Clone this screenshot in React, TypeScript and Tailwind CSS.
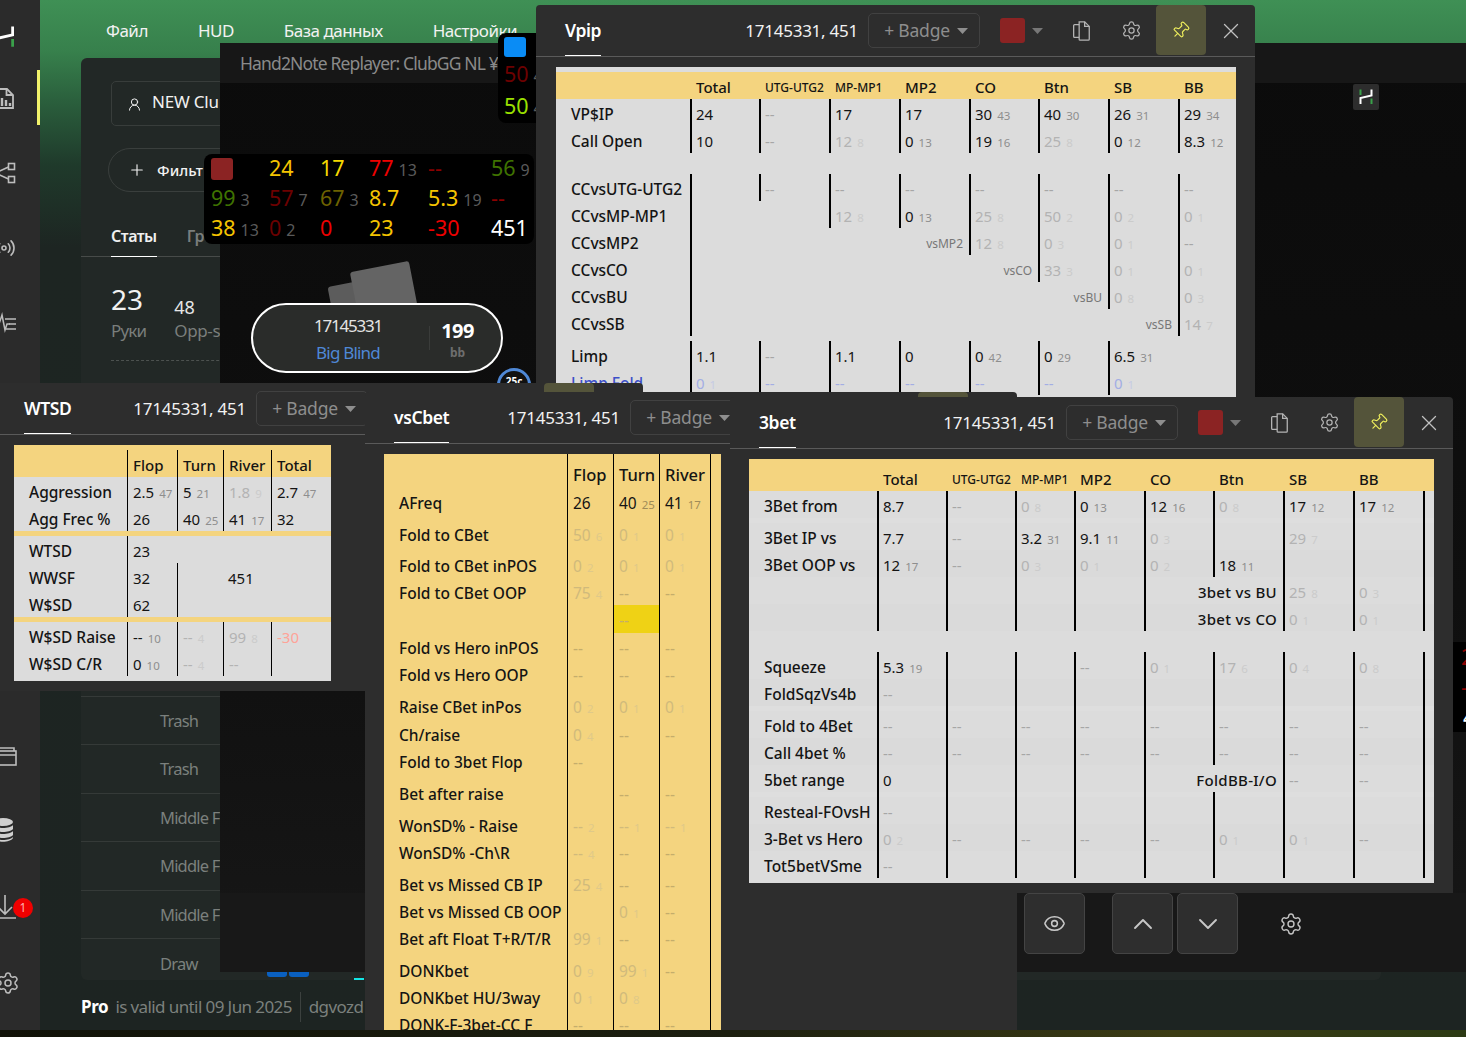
import React from "react";
import { ChevronDown, ChevronUp, Eye, Pin, Plus, Radio, Settings, UserRound, X } from "lucide-react";

type Cell = string | { t: string; span: number; small?: boolean; noLine?: boolean };
type Row = {
  label?: string;
  cells?: Cell[];
  h?: string;
  bg?: string;
  blue?: boolean;
};
const span: Record<number, string> = {
  2: "col-span-2",
  3: "col-span-3",
  4: "col-span-4",
  5: "col-span-5",
  6: "col-span-6",
  7: "col-span-7",
};

function Value({ token, tone, blue }: { token: string; tone: "grey" | "yellow"; blue?: boolean }) {
  let text = token;
  let v = "text-[#141414]";
  let n = tone === "grey" ? "text-[#8e8e8e]" : "text-[#a08c58]";
  const fv = tone === "grey" ? "text-[#b3b3b3]" : "text-[#d0ba7c]";
  const fn = tone === "grey" ? "text-[#cbcbcb]" : "text-[#dfc989]";
  if (text.startsWith("~")) {
    text = text.slice(1);
    v = fv;
    n = fn;
  } else if (text === "--") {
    v = tone === "grey" ? "text-[#a6a6a6]" : "text-[#c4ad6c]";
  } else if (text.startsWith("*")) {
    text = text.slice(1);
    v = "text-[#ffa398]";
  }
  if (blue) {
    v = "text-[#a3aee4]";
    n = "text-[#c6cbe4]";
  }
  const [a, b] = text.split(" ");
  return (
    <span className="whitespace-nowrap">
      <span className={v}>{a}</span>
      {b && <span className={`ml-[5px] text-[11.5px] ${n}`}>{b}</span>}
    </span>
  );
}

function StatTable(props: {
  cols: string;
  rows: Row[];
  tone: "grey" | "yellow";
  line: string;
  pad: string;
  cellPad: string;
  className: string;
}) {
  const { cols, rows, tone, line, pad, cellPad, className } = props;
  return (
    <div className={className}>
      {rows.map((r, i) => {
        const isGapOnly = !r.label && !r.cells;
        if (isGapOnly) return <div key={i} className={`${r.h} ${r.bg ?? ""}`} />;
        return (
          <div key={i} className={`grid ${cols} ${r.h ?? "h-[27px]"} ${r.bg ?? ""}`}>
            <div
              className={`flex items-center overflow-hidden whitespace-nowrap pt-1 text-[15.5px] font-medium ${pad} ${
                r.blue ? "text-[#3d50c9]" : "text-[#141414]"
              }`}
            >
              {r.label}
            </div>
            {(r.cells ?? []).map((c, j) => {
              if (typeof c === "string") {
                if (c === ".") return <div key={j} />;
                if (c.startsWith("_"))
                  return (
                    <div key={j} className={`flex items-center pt-1 ${cellPad} text-[#141414]`}>
                      {c.slice(1)}
                    </div>
                  );
                if (c.startsWith("#"))
                  return (
                    <div key={j} className={`flex items-center whitespace-nowrap pt-1 font-medium ${cellPad} ${line} border-black text-[16.5px] text-[#141414]`}>
                      {c.slice(1)}
                    </div>
                  );
                if (c.startsWith("^"))
                  return (
                    <div key={j} className={`flex items-center whitespace-nowrap pt-1 font-medium ${cellPad} ${line} border-black text-[#141414]`}>
                      {c.slice(1)}
                    </div>
                  );
                const hl = c.startsWith("@");
                const tok = hl ? c.slice(1) : c;
                return (
                  <div
                    key={j}
                    className={`flex items-center overflow-hidden pt-1 ${cellPad} ${line} border-black ${hl ? "bg-[#efd215]" : ""}`}
                  >
                    {tok && <Value token={tok} tone={tone} blue={r.blue} />}
                  </div>
                );
              }
              return (
                <div
                  key={j}
                  className={`${span[c.span]} flex items-center justify-end overflow-hidden pr-[6px] pt-1 ${
                    c.noLine ? "" : line
                  } border-black ${c.small ? "text-[12px] text-[#777]" : "font-medium tracking-[0.3px] text-[#141414]"}`}
                >
                  {c.t}
                </div>
              );
            })}
          </div>
        );
      })}
    </div>
  );
}

function WindowShell(props: { title: string; rootClass: string; children: React.ReactNode }) {
  return (
    <div className={`absolute overflow-hidden rounded-t-[4px] bg-[#2d2d2d] ${props.rootClass}`}>
      <div className="flex h-[52px] items-stretch justify-between border-b border-[#5a5a5a] pl-[29px]">
        <div className="flex flex-col justify-start">
          <span className="flex h-[51px] items-center border-b border-white pt-[1px] text-[17.5px] font-semibold tracking-[-0.4px] text-white">
            {props.title}
          </span>
        </div>
        <div className="flex items-center text-[#b4b4b4]">
          <span className="mr-[10px] whitespace-nowrap pt-[1px] text-[17px] tracking-[-0.25px] text-[#f2f2f2]">
            17145331, 451
          </span>
          <div className="flex h-[35px] w-[112px] items-center justify-center gap-[7px] rounded-[5px] border border-[#414141] pl-[4px] text-[17.5px] tracking-[-0.2px] text-[#8e8e8e]">
            <span>+ Badge</span>
            <svg width="11" height="6" viewBox="0 0 11 6">
              <path d="M0 0h11L5.5 6z" fill="#8e8e8e" />
            </svg>
          </div>
          <div className="ml-[20px] h-[25px] w-[25px] rounded-[3px] bg-[#8b2323]" />
          <svg className="ml-[7px]" width="11" height="6" viewBox="0 0 11 6">
            <path d="M0 0h11L5.5 6z" fill="#777" />
          </svg>
          <svg className="ml-[28px] text-[#b4b4b4]" width="20" height="22" viewBox="0 0 20 24" fill="none" stroke="currentColor" strokeWidth="1.400">
            <path d="M8 2h6l5 5v14a1 1 0 0 1-1 1H9a1 1 0 0 1-1-1z" />
            <path d="M14 2v5h5" />
            <path d="M8 5H3a1 1 0 0 0-1 1v12a1 1 0 0 0 1 1h5" />
          </svg>
          <Settings size={21} strokeWidth={1.4} className="ml-[30px] text-[#b4b4b4]" />
          <div className="ml-[14px] flex h-[50px] w-[50px] items-center justify-center self-start rounded-[4px] bg-[#54543a]">
            <Pin size={19} strokeWidth={1.5} className="-translate-x-px rotate-45 text-[#eded5c]" />
          </div>
          <X size={26} strokeWidth={1.2} className="ml-[12px] mr-[11px] text-[#c0c0c0]" />
        </div>
      </div>
      {props.children}
    </div>
  );
}

const Y = "bg-[#f4d47f]";
const G = "bg-[#dcdcdc]";
const g5 = { h: "h-[5px]" };

const dash8 = ["--", "--", "--", "--", "--", "--", "--", "--", ""];

const vpipRows: Row[] = [
  { h: "h-[27px]" },
  { label: "VP$IP", cells: ["24", "--", "17", "17", "30 43", "40 30", "26 31", "29 34"] },
  { label: "Call Open", cells: ["10", "--", "~12 8", "0 13", "19 16", "~25 8", "0 12", "8.3 12"] },
  { h: "h-[21px]" },
  { label: "CCvsUTG-UTG2", cells: ["", "--", "--", "--", "--", "--", "--", "--"] },
  { label: "CCvsMP-MP1", cells: [{ t: "", span: 2 }, "~12 8", "0 13", "~25 8", "~50 2", "~0 2", "~0 1"] },
  { label: "CCvsMP2", cells: [{ t: "vsMP2", span: 4, small: true }, "~12 8", "~0 3", "~0 1", "--"] },
  { label: "CCvsCO", cells: [{ t: "vsCO", span: 5, small: true }, "~33 3", "~0 1", "~0 1"] },
  { label: "CCvsBU", cells: [{ t: "vsBU", span: 6, small: true }, "~0 8", "~0 3"] },
  { label: "CCvsSB", cells: [{ t: "vsSB", span: 7, small: true }, "~14 7"] },
  g5,
  { label: "Limp", cells: ["1.1", "--", "1.1", "0", "0 42", "0 29", "6.5 31", "."] },
  { label: "Limp Fold", blue: true, cells: ["0 1", "--", "--", "--", "--", "--", "0 1", "."] },
];

const blank9 = ["", "", "", "", "", "", "", "", ""];
const threeRows: Row[] = [
  { label: "3Bet from", cells: ["8.7", "--", "~0 8", "0 13", "12 16", "~0 8", "17 12", "17 12", ""] },
  { label: " ", h: "h-[5px]", bg: "bg-[#dedede]", cells: blank9 },
  { label: "3Bet IP vs", cells: ["7.7", "--", "3.2 31", "9.1 11", "~0 3", "", "~29 7", "", ""] },
  { label: "3Bet OOP vs", bg: "bg-[#dadada]", cells: ["12 17", "--", "~0 3", "~0 1", "~0 2", "18 11", "", "", ""] },
  { label: " ", cells: ["", "", "", "", { t: "3bet vs BU", span: 2 }, "~25 8", "~0 3", ""] },
  { label: " ", bg: "bg-[#dadada]", cells: ["", "", "", "", { t: "3bet vs CO", span: 2 }, "~0 1", "~0 1", ""] },
  { h: "h-[21px]" },
  { label: "Squeeze", cells: ["5.3 19", "", "", "--", "~0 1", "~17 6", "~0 4", "~0 8", ""] },
  { label: "FoldSqzVs4b", bg: "bg-[#dadada]", cells: ["--", "", "", "", "", "", "", "", ""] },
  { label: " ", h: "h-[5px]", bg: "bg-[#dedede]", cells: blank9 },
  { label: "Fold to 4Bet", cells: dash8 },
  { label: "Call 4bet %", bg: "bg-[#dadada]", cells: dash8 },
  { label: "5bet range", cells: ["0", "", "", "", { t: "FoldBB-I/O", span: 2 }, "--", "--", ""] },
  { label: " ", h: "h-[5px]", bg: "bg-[#dedede]", cells: blank9 },
  { label: "Resteal-FOvsH", cells: ["--", "", "", "", "", "", "", "", ""] },
  { label: "3-Bet vs Hero", bg: "bg-[#dadada]", cells: ["~0 2", "--", "--", "--", "--", "~0 1", "~0 1", "--", ""] },
  { label: "Tot5betVSme", cells: ["--", "", "", "", "", "", "", "", ""] },
];

const wtsdRows: Row[] = [
  { label: " ", bg: Y, h: "h-[27px]", cells: ["^Flop", "^Turn", "^River", "^Total"] },
  { label: "Aggression", cells: ["2.5 47", "5 21", "~1.8 9", "2.7 47"] },
  { label: "Agg Frec %", cells: ["26", "40 25", "41 17", "32"] },
  { h: "h-[5px]", bg: Y },
  { label: "WTSD", cells: ["23", ".", ".", "."] },
  { label: "WWSF", cells: ["32", "", "_451", "."] },
  { label: "W$SD", cells: ["62", "", ".", "."] },
  { h: "h-[5px]", bg: Y },
  { label: "W$SD Raise", cells: ["-- 10", "~-- 4", "~99 8", "*-30"] },
  { label: "W$SD C/R", cells: ["0 10", "~-- 4", "~--", ""] },
];

const s = (h: string): Row => ({ label: " ", h, cells: ["", "", "", ""] });
const cbetRows: Row[] = [
  s("h-[5px]"),
  { label: " ", h: "h-[28px]", cells: ["#Flop", "#Turn", "#River", ""] },
  s("h-[1px]"),
  { label: "AFreq", cells: ["26", "40 25", "41 17", ""] },
  s("h-[5px]"),
  { label: "Fold to CBet", cells: ["~50 6", "~0 1", "~0 1", ""] },
  s("h-[4px]"),
  { label: "Fold to CBet inPOS", cells: ["~0 2", "~0 1", "~0 1", ""] },
  { label: "Fold to CBet OOP", h: "h-[27px]", cells: ["~75 4", "--", "--", ""] },
  { label: " ", h: "h-[28px]", cells: ["", "@--", "", ""] },
  { label: "Fold vs Hero inPOS", h: "h-[27px]", cells: ["--", "--", "--", ""] },
  { label: "Fold vs Hero OOP", cells: ["--", "--", "--", ""] },
  s("h-[5px]"),
  { label: "Raise CBet inPos", cells: ["~0 2", "~0 1", "~0 1", ""] },
  s("h-[1px]"),
  { label: "Ch/raise", cells: ["~0 4", "--", "--", ""] },
  { label: "Fold to 3bet Flop", cells: ["--", "", "", ""] },
  s("h-[5px]"),
  { label: "Bet after raise", cells: ["", "--", "--", ""] },
  s("h-[5px]"),
  { label: "WonSD% - Raise", cells: ["~-- 2", "~-- 1", "~-- 1", ""] },
  { label: "WonSD% -Ch\\R", cells: ["~-- 4", "--", "--", ""] },
  s("h-[5px]"),
  { label: "Bet vs Missed CB IP", cells: ["~25 4", "--", "--", ""] },
  { label: "Bet vs Missed CB OOP", cells: ["", "~0 1", "--", ""] },
  { label: "Bet aft Float T+R/T/R", cells: ["~99 1", "--", "--", ""] },
  s("h-[5px]"),
  { label: "DONKbet", cells: ["~0 9", "~99 1", "--", ""] },
  { label: "DONKbet HU/3way", cells: ["~0 1", "~0 8", "", ""] },
  { label: "DONK-F-3bet-CC F", cells: ["--", "--", "--", ""] },
];

function HeadRow({ cols, labels, pad }: { cols: string; labels: string[]; pad: string }) {
  return (
    <div className={`grid ${cols} h-[27px] ${Y} font-medium text-[#141414]`}>
      <div />
      {labels.map((l, i) => (
        <div key={i} className={`flex items-center whitespace-nowrap pt-1 ${pad} ${l.includes("-") ? "text-[12px]" : ""}`}>
          {l}
        </div>
      ))}
    </div>
  );
}

function Hud({ rows, className }: { rows: [string, string, string?][][]; className: string }) {
  return (
    <div className={`absolute rounded-[8px] bg-black ${className}`}>
      {rows.map((r, i) => (
        <div key={i} className="grid h-[30px] grid-cols-[58px_51px_49px_59px_63px_50px] items-center pb-[3px]">
          {r.map(([v, c, n], j) => (
            <div key={j} className="flex items-baseline whitespace-nowrap">
              {v === "■" ? (
                <div className="h-[22px] w-[22px] translate-y-[1px] rounded-[3px] bg-[#8b2323]" />
              ) : (
                <span className={`text-[21.5px] leading-[28px] ${c}`}>{v}</span>
              )}
              {n && <span className="ml-[5px] text-[16px] text-[#5a5a5a]">{n}</span>}
            </div>
          ))}
        </div>
      ))}
    </div>
  );
}

function Logo({ size = 26 }: { size?: number }) {
  return (
    <svg width={size} height={size} viewBox="0 0 26 26">
      <path d="M7.5 20v-6l11-2.5V5.500" fill="none" stroke="#fff" strokeWidth="2" />
      <path d="M7.500 5.500v5.500M18.500 14.500v5.500" fill="none" stroke="#3aa14a" strokeWidth="2" />
    </svg>
  );
}

const dim = "text-[#bdbdbd]";

export default function App() {
  return (
    <div className="relative flex h-[1037px] w-[1466px] overflow-hidden bg-[linear-gradient(90deg,#111208_0%,#1c1f10_50%,#3c3c14_80%,#2c3a14_100%)] font-['Noto_Sans',sans-serif] text-[15px]">
      {/* sidebar */}
      <aside className="flex h-[1030px] w-[40px] shrink-0 flex-col bg-[#2b2b2b] pb-[10px]">
        <div className="flex h-[60px] items-center pt-[14px]">
          <div className="-ml-[13px]">
            <Logo size={36} />
          </div>
        </div>
        <div className="relative flex h-[75px] items-center">
          <svg className={`-ml-[9px] ${dim}`} width="24" height="24" viewBox="0 0 24 24" fill="none" stroke="currentColor" strokeWidth="1.8">
            <path d="M4 3h12l6 6v13H4z" />
            <path d="M15.500 3v6h6" />
            <path d="M7 20v-5M11 20v-8M15 20v-6M19 20v-3" strokeWidth="2.400" />
          </svg>
          <div className="absolute right-0 top-[10px] h-[55px] w-[3px] bg-[#f2f26b]" />
        </div>
        <div className="flex h-[75px] items-center">
          <svg className={`-ml-[8px] ${dim}`} width="24" height="24" viewBox="0 0 24 24" fill="none" stroke="currentColor" strokeWidth="1.6">
            <circle cx="4" cy="12" r="3" />
            <rect x="16.500" y="2.500" width="6" height="6" />
            <rect x="16.500" y="15.500" width="6" height="6" />
            <path d="M6.500 10.500 16.500 6M6.500 13.500l10 4.500" />
          </svg>
        </div>
        <div className="flex h-[75px] items-center">
          <Radio size={24} strokeWidth={1.6} className={`-ml-[8px] ${dim}`} />
        </div>
        <div className="flex h-[75px] items-center">
          <svg className={`-ml-[7px] ${dim}`} width="24" height="24" viewBox="0 0 24 24" fill="none" stroke="currentColor" strokeWidth="1.500">
            <path d="M3 13h3l3-9 3 15 2-6h3" />
            <path d="M12 8h11M16 13h7M13 18h10" />
          </svg>
        </div>
        <div className="mt-auto flex h-[71px] items-center">
          <svg className={`-ml-[7px] ${dim}`} width="24" height="24" viewBox="0 0 24 24" fill="none" stroke="currentColor" strokeWidth="1.600">
            <rect x="1" y="7" width="22" height="14" />
            <path d="M1 11h22M4 7V4h17v3" />
          </svg>
        </div>
        <div className="flex h-[77px] items-center">
          <svg className="-ml-[9px] text-[#cfcfcf]" width="24" height="26" viewBox="0 0 24 26" fill="currentColor">
            <ellipse cx="12" cy="5" rx="10" ry="4" />
            <path d="M2 8c3 4 17 4 20 0v4c-3 4-17 4-20 0zM2 14c3 4 17 4 20 0v4c-3 4-17 4-20 0zM2 20c3 4 17 4 20 0v1c-3 5-17 5-20 0z" />
          </svg>
        </div>
        <div className="relative flex h-[77px] items-center">
          <svg className={`-ml-[7px] ${dim}`} width="24" height="26" viewBox="0 0 24 26" fill="none" stroke="currentColor" strokeWidth="1.600">
            <path d="M12 1v18M5 13l7 7 7-7M1 24h22" />
          </svg>
          <span className="absolute left-[13px] top-[30px] flex h-[20px] w-[20px] items-center justify-center rounded-full bg-[#f00000] text-[12px] text-[#ffb0b0]">
            1
          </span>
        </div>
        <div className="flex h-[75px] items-center">
          <Settings size={24} strokeWidth={1.500} className={`-ml-[4px] ${dim}`} />
        </div>
      </aside>

      {/* main column */}
      <main className="flex h-[1030px] min-w-0 flex-1 flex-col bg-[linear-gradient(180deg,#3f9055_0%,#37804c_5%,#2a5e3c_10%,#1f3a2b_16%,#1d2522_24%,#1d2422_100%)]">
        <nav className="flex h-[58px] shrink-0 items-start gap-[50px] pl-[66px] pt-[18px] text-[17px] tracking-[-0.5px] text-[#f2f2f2]">
          <span>Файл</span>
          <span>HUD</span>
          <span>База данных</span>
          <span>Настройки</span>
        </nav>
        <section className="relative ml-[41px] flex h-[922px] w-[1300px] flex-col rounded-[6px] bg-[#222826]">
          <div className="ml-[30px] mt-[23px] flex h-[45px] w-[240px] items-center gap-[10px] rounded-[5px] border border-[#383d3b] pb-[3px] pl-[15px] text-[17px] tracking-[-0.2px] text-[#f2f2f2]">
            <UserRound size={15} strokeWidth={1.6} className="translate-y-[2px]" />
            NEW Clu
          </div>
          <div className="ml-[27px] mt-[22px] flex h-[44px] w-[240px] items-center gap-[11px] rounded-full border border-[#3a3f3d] pl-[19px] text-[15px] font-medium text-[#f2f2f2]">
            <Plus size={18} strokeWidth={1.5} />
            Фильт
          </div>
          <div className="mt-[30px] flex h-[35px] gap-[30px] border-b border-[#474b49] pl-[30px] text-[16px] font-semibold tracking-[-0.5px]">
            <span className="flex h-[35px] items-start border-b border-white pt-[2px] text-[#f0f0f0]">Статы</span>
            <span className="pt-[2px] text-[#7a7e7c]">Гр</span>
          </div>
          <div className="flex h-[103px] gap-[28px] pl-[30px] pt-[24px]">
            <div className="flex flex-col">
              <span className="text-[28px] leading-[36px] text-[#f2f2f2]">23</span>
              <span className="mt-[2px] text-[17px] leading-[24px] tracking-[-0.8px] text-[#7a7e7c]">Руки</span>
            </div>
            <div className="flex flex-col pt-[12px]">
              <span className="text-[18px] leading-[28px] text-[#e6e6e6]">48</span>
              <span className="-mt-[2px] text-[17px] leading-[24px] tracking-[-0.4px] text-[#7a7e7c]">Opp-s</span>
            </div>
          </div>
          <div className="mx-[30px] border-t border-dashed border-[#4c514f]" />
          <div className="mt-auto flex flex-col text-[16.5px] tracking-[-0.8px] text-[#7b807d]">
            {["Trash", "Trash", "Middle F", "Middle F", "Middle F", "Draw"].map((t, i) => (
              <div
                key={i}
                className={`flex border-t border-[#353a38] pl-[79px] ${i === 5 ? "h-[42px] items-start pt-[13px]" : "h-[48.500px] items-center pt-[2px]"}`}
              >
                {t}
              </div>
            ))}
          </div>
          <div className="absolute left-[186px] top-[914px] h-[5px] w-[20px] rounded-b-[3px] bg-[#0a60c0]" />
          <div className="absolute left-[208px] top-[914px] h-[5px] w-[20px] rounded-b-[3px] bg-[#0a60c0]" />
          <div className="absolute left-[273px] top-[920px] h-[2px] w-[10px] bg-[#14e6e6]" />
        </section>
        <footer className="ml-[41px] flex h-[50px] items-center pt-[3px] text-[17px] tracking-[-0.6px] text-[#7b807d]">
          <span className="mr-[7px] font-bold tracking-[-0.35px] text-white">Pro</span>
          <span>is valid until 09 Jun 2025</span>
          <span className="mx-[8px] h-[30px] w-px bg-[#3c413f]" />
          <span>dgvozd</span>
        </footer>
      </main>

      {/* replayer window */}
      <div className="absolute left-[220px] top-[43px] flex h-[929px] w-[1246px] flex-col bg-[linear-gradient(180deg,#0b0b0b_0%,#0f0f0f_60%,#171717_100%)]">
        <div className="flex h-[40px] shrink-0 items-center bg-[#171717] pl-[20px] pt-[1px] text-[17.5px] tracking-[-0.85px] text-[#8a8a8a]">
          Hand2Note Replayer: ClubGG NL ¥
        </div>
        <div className="absolute left-[1133px] top-[41px] flex h-[26px] w-[26px] items-center justify-center rounded-[2px] bg-[#2d2d2d]">
          <Logo />
        </div>
        <div className="mt-auto flex h-[79px] shrink-0 items-start justify-start gap-[4px] bg-[#181818] pl-[892px]">
          <div className="flex h-[61px] w-[61px] items-center justify-center rounded-[5px] border border-[#444] bg-[#2e2e2e] text-[#c8c8c8]">
            <ChevronUp size={32} strokeWidth={1.4} />
          </div>
          <div className="flex h-[61px] w-[61px] items-center justify-center rounded-[5px] border border-[#444] bg-[#2e2e2e] text-[#c8c8c8]">
            <ChevronDown size={32} strokeWidth={1.4} />
          </div>
          <Settings size={24} strokeWidth={1.4} className="ml-[37px] mt-[19px] text-[#c4c4c4]" />
        </div>
        <div className="absolute left-[804px] top-[850px] flex h-[61px] w-[61px] items-center justify-center rounded-[5px] border border-[#444] bg-[#2e2e2e] text-[#c8c8c8]">
          <Eye size={23} strokeWidth={1.6} />
        </div>
      </div>

      {/* table elements */}
      <div className="absolute left-[331px] top-[283px] h-[40px] w-[40px] -rotate-[11deg] rounded-[3px] bg-[#5c5c5c]" />
      <div className="absolute left-[355px] top-[266px] h-[60px] w-[60px] -rotate-[11deg] rounded-[3px] bg-[#646464]" />
      <div className="absolute left-[251px] top-[303px] flex h-[70px] w-[252px] items-center rounded-full border-2 border-white bg-[#2a2c2a]">
        <div className="flex w-[175px] flex-col items-center gap-[3px] pl-[15px] pt-[3px]">
          <span className="text-[17px] leading-[24px] tracking-[-1.2px] text-[#e4e4e4]">17145331</span>
          <span className="text-[17px] leading-[24px] tracking-[-0.8px] text-[#4f88d6]">Big Blind</span>
        </div>
        <div className="ml-[1px] h-[24px] w-px bg-[#3a3c3a]" />
        <div className="flex flex-1 flex-col items-center pr-[16px] pt-[7px] leading-[22px]">
          <span className="text-[20px] font-bold tracking-[-0.6px] text-white">199</span>
          <span className="text-[12px] font-bold text-[#6e6e6e]">bb</span>
        </div>
      </div>
      <div className="absolute left-[497px] top-[368px] flex h-[36px] w-[34px] items-start justify-center rounded-full border-[3px] border-[#4f88d6] bg-[#111] pt-[3px] text-[10px] font-bold text-white">
        25c
      </div>

      {/* HUDs */}
      <div className="absolute left-[498px] top-[33px] flex h-[90px] w-[60px] flex-col rounded-[8px] bg-black pl-[6px] pt-[4px]">
        <div className="h-[22px] w-[22px] rounded-[3px] bg-[#0a8cf5]" />
        <span className="mt-[2px] whitespace-nowrap text-[21.500px] leading-[30px] text-[#6d0000]">
          50<span className="ml-[5px] text-[16px] text-[#5a5a5a]">4</span>
        </span>
        <span className="whitespace-nowrap text-[21.500px] leading-[30px] text-[#9be000]">
          50<span className="ml-[5px] text-[16px] text-[#5a5a5a]">4</span>
        </span>
      </div>
      <Hud
        className="left-[204px] top-[154px] h-[90px] w-[330px] pl-[7px]"
        rows={[
          [
            ["■", ""],
            ["24", "text-[#f5c400]"],
            ["17", "text-[#f5d800]"],
            ["77", "text-[#ee0000]", "13"],
            ["--", "text-[#8c0000]"],
            ["56", "text-[#3f7300]", "9"],
          ],
          [
            ["99", "text-[#3f7300]", "3"],
            ["57", "text-[#6d0000]", "7"],
            ["67", "text-[#6d6200]", "3"],
            ["8.7", "text-[#f5c400]"],
            ["5.3", "text-[#f5c400]", "19"],
            ["--", "text-[#8c0000]"],
          ],
          [
            ["38", "text-[#f5c400]", "13"],
            ["0", "text-[#6d0000]", "2"],
            ["0", "text-[#ee0000]"],
            ["23", "text-[#f5c400]"],
            ["-30", "text-[#ee0000]"],
            ["451", "text-white"],
          ],
        ]}
      />
      <div className="absolute left-[1453px] top-[642px] flex h-[90px] w-[40px] flex-col bg-black pl-[8px] text-[21.500px] leading-[30px]">
        <span className="text-[#8c0000]">2</span>
        <span className="text-[#8c0000]">-</span>
        <span className="pl-[2px] text-white">4</span>
      </div>

      {/* stat windows */}
      <WindowShell title="Vpip" rootClass="left-[536px] top-[5px] h-[395px] w-[719px]">
        <div className="relative ml-[20px] mt-[10px] w-[680px]">
          <div className={`h-[5px] ${G}`} />
          <div className="absolute left-0 right-0 top-[5px]">
            <HeadRow
              cols="grid-cols-[134px_69px_70px_70px_70px_69px_70px_70px_58px]"
              pad="pl-[6px]"
              labels={["Total", "UTG-UTG2", "MP-MP1", "MP2", "CO", "Btn", "SB", "BB"]}
            />
          </div>
          <StatTable
            className={`h-[325px] overflow-hidden ${G}`}
            cols="grid-cols-[134px_69px_70px_70px_70px_69px_70px_70px_58px]"
            rows={vpipRows}
            tone="grey"
            line="border-l-2"
            pad="pl-[15px]"
            cellPad="pl-[4px]"
          />
        </div>
      </WindowShell>

      <WindowShell title="WTSD" rootClass="left-[-5px] top-[383px] h-[308px] w-[648px]">
        <div className="ml-[19px] mt-[10px] w-[317px]">
          <div className={`h-[5px] ${Y}`} />
          <StatTable
            className={G}
            cols="grid-cols-[113px_50px_46px_48px_60px]"
            rows={wtsdRows}
            tone="grey"
            line="border-l"
            pad="pl-[15px]"
            cellPad="pl-[5px]"
          />
          <div className={`h-[5px] ${G}`} />
        </div>
      </WindowShell>

      <WindowShell title="vsCbet" rootClass="left-[365px] top-[392px] h-[638px] w-[652px]">
        <div className="ml-[19px] mt-[10px] w-[337px]">
          <StatTable
            className={`h-[576px] overflow-hidden text-[15.5px] ${Y}`}
            cols="grid-cols-[183px_46px_46px_51px_11px]"
            rows={cbetRows}
            tone="yellow"
            line="border-l"
            pad="pl-[15px]"
            cellPad="pl-[5px]"
          />
        </div>
      </WindowShell>

      <WindowShell title="3bet" rootClass="left-[730px] top-[397px] h-[496px] w-[723px]">
        <div className="ml-[19px] mt-[10px] w-[685px]">
          <div className={`grid h-[32px] grid-cols-[128px_69px_69px_59px_70px_69px_70px_70px_70px_11px] pt-[5px] font-medium text-[#141414] ${Y}`}>
            <div />
            {["Total", "UTG-UTG2", "MP-MP1", "MP2", "CO", "Btn", "SB", "BB"].map((l, i) => (
              <div key={i} className={`flex items-center whitespace-nowrap pl-[6px] pt-1 ${l.includes("-") ? "text-[12px]" : ""}`}>
                {l}
              </div>
            ))}
          </div>
          <StatTable
            className={G}
            cols="grid-cols-[128px_69px_69px_59px_70px_69px_70px_70px_70px_11px]"
            rows={threeRows}
            tone="grey"
            line="border-l-2"
            pad="pl-[15px]"
            cellPad="pl-[4px]"
          />
          <div className={`h-[5px] ${G}`} />
        </div>
      </WindowShell>
    </div>
  );
}
